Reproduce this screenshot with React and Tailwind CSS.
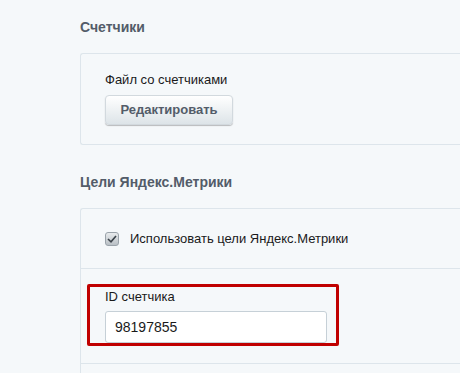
import React from "react";

export default function App() {
  return (
    <div className="w-[460px] h-[373px] overflow-hidden bg-[#f5f8fa] pl-[80px] font-['Liberation_Sans',Arial,sans-serif] relative">
      <div className="h-[53px] pt-[18px]">
        <div className="text-[14px] leading-[18px] font-bold text-[#535c69]">Счетчики</div>
      </div>
      <div className="h-[92px] border border-r-0 border-[#dde5eb] rounded-l-[3px] pl-[24px] pt-[18px]">
        <div className="text-[13px] leading-[16px] text-[#1a1a1a]">Файл со счетчиками</div>
        <button className="mt-[7px] w-[128px] h-[30px] rounded-[4px] border border-[#d2d9de] bg-gradient-to-b from-[#ffffff] to-[#dde4e8] shadow-[0_1px_1px_rgba(0,0,0,0.25)] text-[13px] font-bold text-[#535c69] flex items-center justify-center">
          Редактировать
        </button>
      </div>
      <div className="h-[63px] pt-[28px]">
        <div className="text-[14px] leading-[18px] font-bold text-[#535c69]">Цели Яндекс.Метрики</div>
      </div>
      <div className="border border-r-0 border-b-0 border-[#dde5eb] rounded-tl-[3px]">
        <div className="h-[59px] flex items-center pl-[24px] gap-[11px]">
          <div className="w-[14px] h-[14px] rounded-[3px] border border-[#9aa3aa] bg-gradient-to-b from-[#e8ebed] to-[#b9c0c5] flex items-center justify-center">
            <svg width="10" height="8" viewBox="0 0 10 8">
              <path d="M1 4 L4 6.8 L9 1" fill="none" stroke="#3a4249" strokeWidth="1.6" />
            </svg>
          </div>
          <span className="text-[13px] leading-[16px] text-[#1a1a1a]">Использовать цели Яндекс.Метрики</span>
        </div>
        <div className="h-[95px] border-t border-[#dde5eb] pl-[24px] pt-[20px]">
          <div className="text-[13px] leading-[16px] text-[#1a1a1a]">ID счетчика</div>
          <div className="mt-[6px] w-[222px] h-[32px] bg-white border border-[#c6d0d7] rounded-[3px] flex items-center pl-[9px] text-[14px] text-[#1a1a1a]">
            98197855
          </div>
        </div>
        <div className="h-[20px] border-t border-[#dde5eb]"></div>
      </div>
      <div className="absolute left-[87px] top-[284px] w-[252px] h-[62px] border-[3px] border-[#c00000] rounded-[2px] pointer-events-none"></div>
    </div>
  );
}
